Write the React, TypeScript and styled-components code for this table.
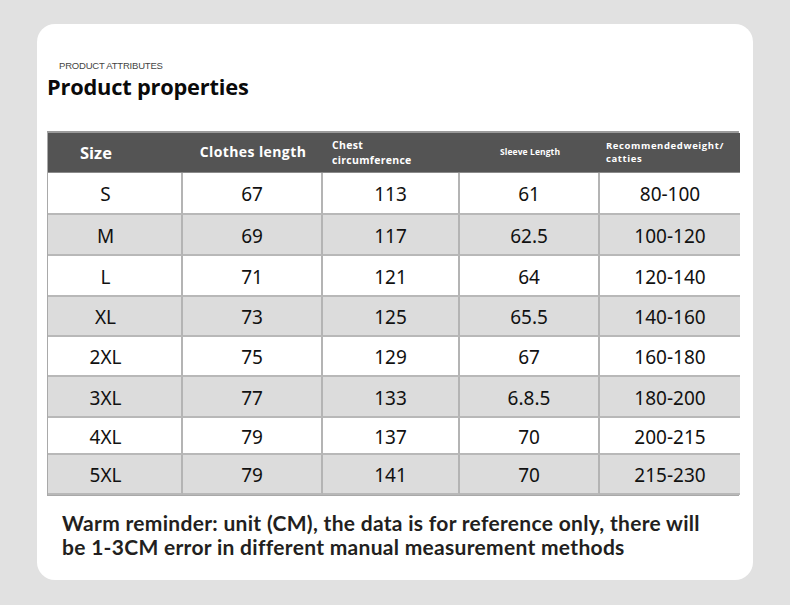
import React from "react";
import styled, { createGlobalStyle } from "styled-components";

const Global = createGlobalStyle`
  html, body { margin: 0; padding: 0; background: #e1e1e1; }
  body { font-family: "Open Sans", "Noto Sans", sans-serif; }
`;

const Page = styled.div`
  width: 790px;
  height: 605px;
  box-sizing: border-box;
  padding: 24px 37px 25px 37px;
  background: #e1e1e1;
`;

const Card = styled.div`
  width: 716px;
  height: 556px;
  box-sizing: border-box;
  background: #ffffff;
  border-radius: 18px;
  padding: 10px 14px 0 10px;
  display: flex;
  flex-direction: column;
`;

const Eyebrow = styled.div`
  margin: 26px 0 0 12px;
  font-family: "Liberation Sans", Arial, sans-serif;
  font-size: 9.5px;
  line-height: 11px;
  color: #444;
  letter-spacing: -0.2px;
`;

const Title = styled.h1`
  margin: 1px 0 0 0;
  font-family: "Open Sans", sans-serif;
  font-weight: 700;
  font-size: 21.8px;
  line-height: 30px;
  color: #0a0a0a;
  letter-spacing: -0.2px;
`;

const Table = styled.div`
  margin-top: 29px;
  display: grid;
  grid-template-columns: 135px 140px 137px 140px 140px;
  border: 1px solid #a9a9a9;
  border-top: 2px solid #9a9a9a;
`;

const HeadCell = styled.div<{ $align?: "left" | "center"; $pad?: number }>`
  height: 40px;
  background: #545454;
  color: #ffffff;
  display: flex;
  align-items: center;
  justify-content: ${(p) => (p.$align === "left" ? "flex-start" : "center")};
  padding-left: ${(p) => p.$pad ?? 0}px;
  box-sizing: border-box;
  font-family: "Open Sans", sans-serif;
  font-weight: 700;
  border-bottom: 1px solid #8a8a8a;
`;

const HeadText = styled.span<{ $size: number; $spacing?: number; $lh?: number }>`
  font-size: ${(p) => p.$size}px;
  letter-spacing: ${(p) => p.$spacing ?? 0}px;
  line-height: ${(p) => p.$lh ?? 1.2};
`;

const Cell = styled.div<{ $alt: boolean; $first?: boolean; $last?: boolean; $h: number }>`
  height: ${(p) => p.$h}px;
  box-sizing: border-box;
  background: ${(p) => (p.$alt ? "#dcdcdc" : "#ffffff")};
  border-right: ${(p) => (p.$last ? "none" : "2px solid #b4b4b4")};
  border-bottom: 2px solid #b8b8b8;
  display: flex;
  align-items: center;
  justify-content: center;
  padding-right: ${(p) => (p.$first ? 18 : 0)}px;
  padding-top: 2px;
  font-family: "Noto Sans", sans-serif;
  font-size: 19px;
  color: #111;
`;

const Note = styled.p`
  margin: 15px 0 0 15px;
  font-family: "Lato", sans-serif;
  font-weight: 700;
  font-size: 21px;
  line-height: 24px;
  letter-spacing: 0.3px;
  color: #231f20;
  white-space: nowrap;
`;

const rows: [string, string, string, string, string][] = [
  ["S", "67", "113", "61", "80-100"],
  ["M", "69", "117", "62.5", "100-120"],
  ["L", "71", "121", "64", "120-140"],
  ["XL", "73", "125", "65.5", "140-160"],
  ["2XL", "75", "129", "67", "160-180"],
  ["3XL", "77", "133", "6.8.5", "180-200"],
  ["4XL", "79", "137", "70", "200-215"],
  ["5XL", "79", "141", "70", "215-230"],
];

const heights = [42, 41, 41, 40, 40, 41, 37, 40];

export default function App() {
  return (
    <>
      <Global />
      <Page>
        <Card>
          <Eyebrow>PRODUCT ATTRIBUTES</Eyebrow>
          <Title>Product properties</Title>
          <Table>
            <HeadCell $align="left" $pad={32}>
              <HeadText $size={16.5}>Size</HeadText>
            </HeadCell>
            <HeadCell>
              <HeadText $size={14} $spacing={0.4}>Clothes length</HeadText>
            </HeadCell>
            <HeadCell $align="left" $pad={9}>
              <HeadText $size={10.5} $spacing={0.3} $lh={1.4}>
                Chest
                <br />
                circumference
              </HeadText>
            </HeadCell>
            <HeadCell>
              <HeadText $size={8.5} $spacing={0.1}>Sleeve Length</HeadText>
            </HeadCell>
            <HeadCell $align="left" $pad={6}>
              <HeadText $size={9.5} $spacing={0.6} $lh={1.35}>
                Recommendedweight/
                <br />
                catties
              </HeadText>
            </HeadCell>
            {rows.map((r, i) =>
              r.map((v, j) => (
                <Cell
                  key={`${i}-${j}`}
                  $alt={i % 2 === 1}
                  $first={j === 0}
                  $last={j === 4}
                  $h={heights[i]}
                >
                  {v}
                </Cell>
              ))
            )}
          </Table>
          <Note>
            Warm reminder: unit (CM), the data is for reference only, there will
            <br />
            be 1-3CM error in different manual measurement methods
          </Note>
        </Card>
      </Page>
    </>
  );
}
